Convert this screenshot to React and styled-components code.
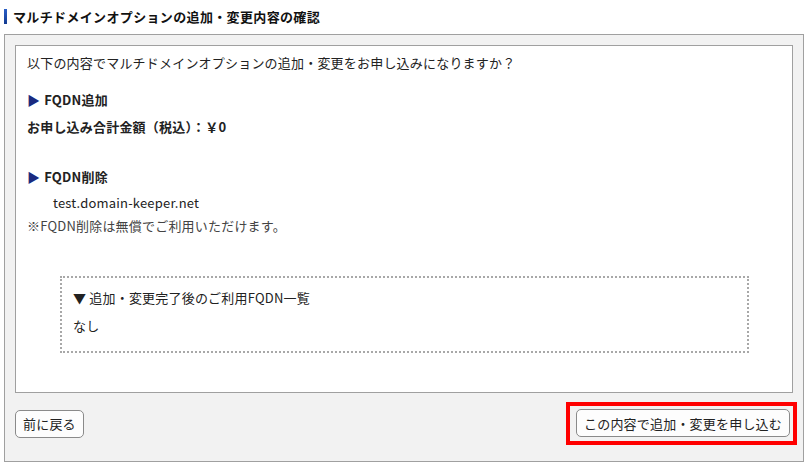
import React from 'react';
import styled, { createGlobalStyle } from 'styled-components';

const Global = createGlobalStyle`
  body {
    margin: 0;
    background: #fff;
    font-family: "Noto Sans CJK JP", "Noto Sans", sans-serif;
    font-size: 13px;
    color: #222;
    letter-spacing: 0.2px;
  }
`;

const Page = styled.div`
  width: 810px;
  padding: 8px 6px 0 4px;
  box-sizing: border-box;
`;

const Title = styled.h2`
  margin: 0 0 9px;
  font-size: 13px;
  font-weight: bold;
  line-height: 17px;
  letter-spacing: 0.35px;
  display: flex;
  align-items: center;
  gap: 6px;
  color: #111;
  &::before {
    content: '';
    display: block;
    width: 3px;
    height: 15px;
    background: linear-gradient(#2a5fc8, #123a90);
  }
`;

const Outer = styled.div`
  border: 1px solid #a0a0a0;
  background: #f2f2f2;
  padding: 10px 10px 16px;
  height: 428px;
  box-sizing: border-box;
`;

const Inner = styled.div`
  border: 1px solid #a0a0a0;
  background: #fff;
  height: 348px;
  box-sizing: border-box;
  padding: 7px 11px 0;
`;

const Line = styled.p`
  margin: 0;
  line-height: 20px;
  font-weight: ${(p) => (p.$bold ? 'bold' : 'normal')};
  color: ${(p) => (p.$muted ? '#444' : '#222')};
  padding-left: ${(p) => p.$indent || 0}px;
  margin-top: ${(p) => p.$mt || 0}px;
`;

const Arrow = styled.span`
  color: #1a2a80;
  font-size: 13px;
  margin-right: 4px;
`;

const Dotted = styled.div`
  margin: 40px 32px 0 33px;
  border: 2px dotted #a8a8a8;
  height: 77px;
  box-sizing: border-box;
  padding: 10px 11px 0;
`;

const Actions = styled.div`
  display: flex;
  justify-content: space-between;
  align-items: center;
  margin-top: 9px;
`;

const Button = styled.button`
  font-family: inherit;
  font-size: 13px;
  letter-spacing: 0.2px;
  color: #222;
  background: #fdfdfd;
  border: 1px solid #8a8a8a;
  border-radius: 5px;
  height: 28px;
  padding: 0 7px;
  cursor: pointer;
`;

const Highlight = styled.div`
  border: 4px solid #ff0000;
  padding: 3px 3px 4px 6px;
  margin-right: -4px;
`;

export default function App() {
  return (
    <Page>
      <Global />
      <Title>マルチドメインオプションの追加・変更内容の確認</Title>
      <Outer>
        <Inner>
          <Line>以下の内容でマルチドメインオプションの追加・変更をお申し込みになりますか？</Line>
          <Line $bold $mt={17}>
            <Arrow>▶</Arrow>FQDN追加
          </Line>
          <Line $bold $mt={7}>お申し込み合計金額（税込）：￥0</Line>
          <Line $bold $mt={30}>
            <Arrow>▶</Arrow>FQDN削除
          </Line>
          <Line $indent={26} $mt={6}>test.domain-keeper.net</Line>
          <Line $muted $mt={3}>※FQDN削除は無償でご利用いただけます。</Line>
          <Dotted>
            <Line>▼ 追加・変更完了後のご利用FQDN一覧</Line>
            <Line $mt={8}>なし</Line>
          </Dotted>
        </Inner>
        <Actions>
          <Button>前に戻る</Button>
          <Highlight>
            <Button>この内容で追加・変更を申し込む</Button>
          </Highlight>
        </Actions>
      </Outer>
    </Page>
  );
}
